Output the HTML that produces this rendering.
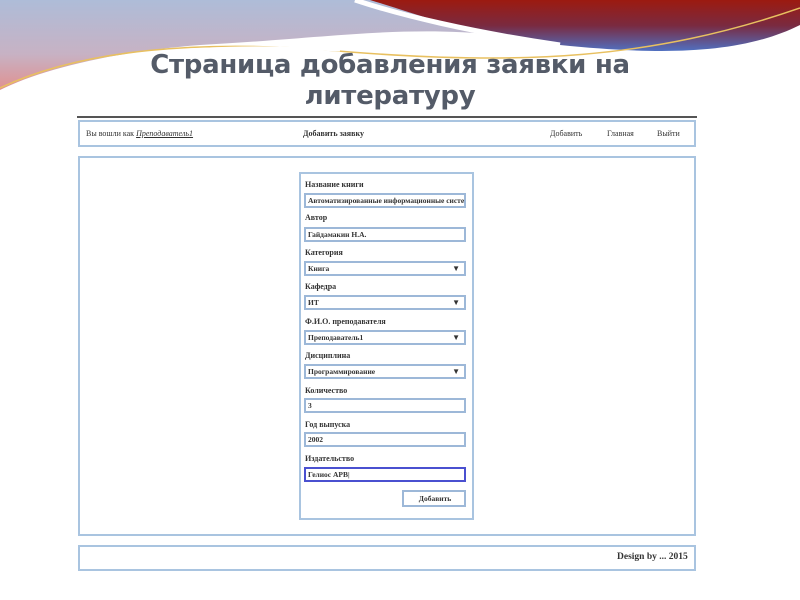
<!DOCTYPE html>
<html><head><meta charset="utf-8"><style>
*{margin:0;padding:0;box-sizing:border-box}
body{width:800px;height:600px;position:relative;overflow:hidden;background:#fff;font-family:"Liberation Serif",serif;color:#222}
.a{position:absolute}
.box{position:absolute;border:2px solid #a9c4e0;background:#fff}
.t{position:absolute;font-size:8px;white-space:nowrap;font-weight:bold;color:#333}
.in{position:absolute;left:304px;width:162px;height:15px;border:2px solid #9db8d8;font-size:7.5px;padding-left:2px;line-height:11px;white-space:nowrap;overflow:hidden;font-weight:bold;color:#333;background:#fff}
.sel:after{content:"▼";position:absolute;right:4px;top:0;font-size:8px}
h1{position:absolute;left:0;width:780px;top:50px;text-align:center;font-family:"DejaVu Sans","Liberation Sans",sans-serif;font-weight:bold;font-size:26px;line-height:31px;color:#545b68;letter-spacing:-0.3px}
</style></head><body>
<svg class="a" style="left:0;top:0" width="800" height="140" viewBox="0 0 800 140">
<defs>
<linearGradient id="g1" x1="0" y1="0" x2="0" y2="1"><stop offset="0" stop-color="#aebcd8"/><stop offset="0.6" stop-color="#c7b2c4"/><stop offset="1" stop-color="#e09090"/></linearGradient>
<linearGradient id="g2" x1="0" y1="0" x2="0" y2="1"><stop offset="0" stop-color="#9c1a10"/><stop offset="0.5" stop-color="#7a2a40"/><stop offset="1" stop-color="#5070c0"/></linearGradient>
</defs>
<path d="M0 0 H800 V20 C700 50 600 50 500 35 C400 25 330 38 200 45 C110 52 40 70 0 90 Z" fill="url(#g1)"/>
<path d="M370 0 H800 V25 C740 55 660 55 560 45 C470 35 420 15 370 0 Z" fill="url(#g2)"/>
<path d="M355 0 C400 15 470 32 560 45" stroke="#fff" stroke-width="5" fill="none"/>
<path d="M0 88 C80 50 200 38 350 52 C520 65 650 60 800 8" stroke="#e8c060" stroke-width="1.5" fill="none"/>
<path d="M0 92 C100 48 220 44 340 50" stroke="#fff" stroke-width="3" fill="none"/>
</svg>
<h1>Страница добавления заявки на<br>литературу</h1>
<div class="a" style="left:77px;top:116px;width:620px;height:2px;background:#555"></div>
<div class="box" style="left:78px;top:120px;width:618px;height:27px"></div>
<div class="t" style="left:86px;top:129px;font-weight:normal">Вы вошли как <i><u>Преподаватель1</u></i></div>
<div class="t" style="left:303px;top:129px">Добавить заявку</div>
<div class="t" style="left:550px;top:129px;font-weight:normal">Добавить</div>
<div class="t" style="left:607px;top:129px;font-weight:normal">Главная</div>
<div class="t" style="left:657px;top:129px;font-weight:normal">Выйти</div>
<div class="box" style="left:78px;top:156px;width:618px;height:380px"></div>
<div class="box" style="left:299px;top:172px;width:175px;height:348px"></div>
<div class="t" style="left:305px;top:180px">Название книги</div>
<div class="in" style="top:193px">Автоматизированные информационные системы</div>
<div class="t" style="left:305px;top:213px">Автор</div>
<div class="in" style="top:227px">Гайдамакин Н.А.</div>
<div class="t" style="left:305px;top:248px">Категория</div>
<div class="in sel" style="top:261px">Книга</div>
<div class="t" style="left:305px;top:282px">Кафедра</div>
<div class="in sel" style="top:295px">ИТ</div>
<div class="t" style="left:305px;top:317px">Ф.И.О. преподавателя</div>
<div class="in sel" style="top:330px">Преподаватель1</div>
<div class="t" style="left:305px;top:351px">Дисциплина</div>
<div class="in sel" style="top:364px">Программирование</div>
<div class="t" style="left:305px;top:386px">Количество</div>
<div class="in" style="top:398px">3</div>
<div class="t" style="left:305px;top:420px">Год выпуска</div>
<div class="in" style="top:432px">2002</div>
<div class="t" style="left:305px;top:454px">Издательство</div>
<div class="in" style="top:467px;border-color:#4a50d0">Гелиос АРВ|</div>
<div class="in" style="top:490px;left:402px;width:64px;height:17px;text-align:center;line-height:13px;background:#fff">Добавить</div>
<div class="box" style="left:78px;top:545px;width:618px;height:26px"></div>
<div class="t" style="left:617px;top:552px;font-size:9.5px">Design by ... 2015</div>
</body></html>
